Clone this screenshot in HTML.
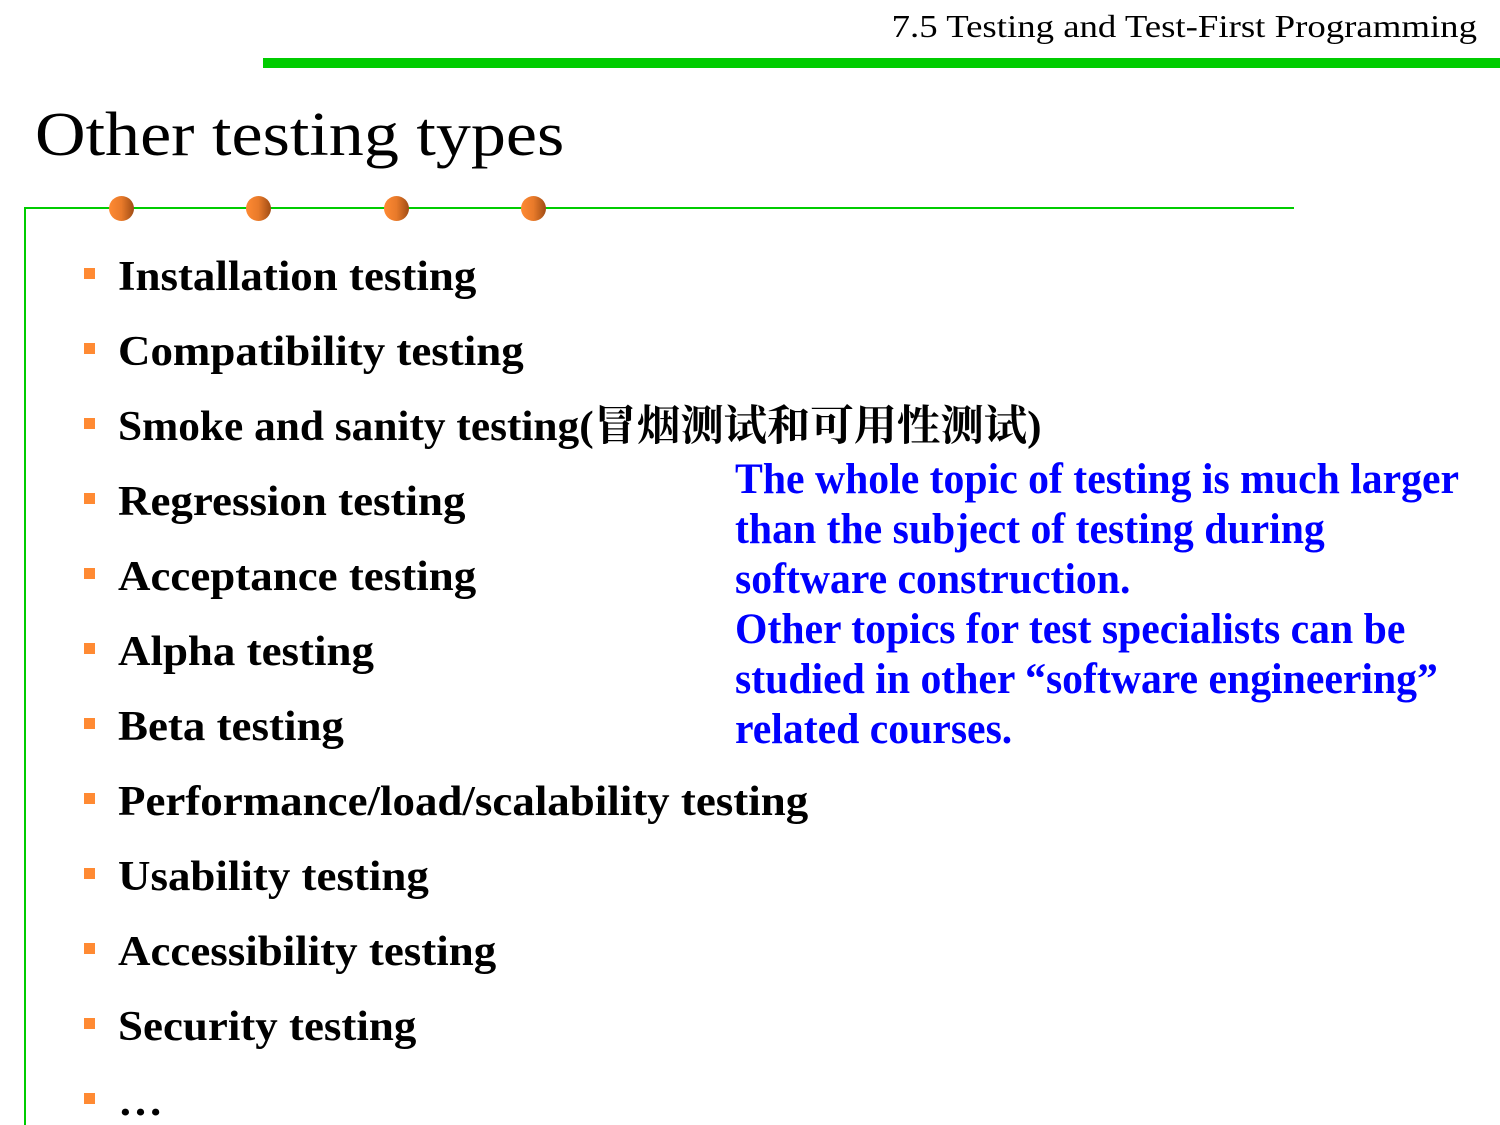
<!DOCTYPE html>
<html><head><meta charset="utf-8"><style>
body{margin:0;width:1500px;height:1125px;background:#fff;position:relative;overflow:hidden;font-family:"Liberation Serif","Noto Serif CJK SC",serif}
.a{position:absolute;white-space:nowrap}
.hdr{right:23px;top:8px;font-size:32px;color:#000;transform:scaleX(1.15);transform-origin:right}
.bar{left:263px;top:58px;width:1237px;height:10px;background:#00cc00}
.title{left:35px;top:100px;font-size:62px;transform:scaleX(1.13);transform-origin:left}
.hl{left:24px;top:207px;width:1270px;height:2px;background:#00cc00}
.vl{left:24px;top:207px;width:2px;height:918px;background:#00cc00}
.dot{position:absolute;top:196px;width:25px;height:25px;border-radius:50%;background:linear-gradient(90deg,#ff8a33 0%,#e87a2a 50%,#a04c14 100%)}
.b{position:absolute;left:84px;width:11px;height:11px;background:#ff8a33}
.t{position:absolute;left:118px;font-size:42px;font-weight:bold;white-space:nowrap;line-height:1;transform:scaleX(1.07);transform-origin:left}
.bl{position:absolute;left:735px;font-size:43px;font-weight:bold;color:#0000ff;white-space:nowrap;line-height:1;transform:scaleX(.97);transform-origin:left}
</style></head><body>
<div class="a hdr">7.5 Testing and Test-First Programming</div>
<div class="a bar"></div>
<div class="a title">Other testing types</div>
<div class="a hl"></div><div class="a vl"></div>
<div class="dot" style="left:109px"></div><div class="dot" style="left:246px"></div><div class="dot" style="left:384px"></div><div class="dot" style="left:521px"></div>

<div class="b" style="top:268px"></div><div class="t" style="top:256px">Installation testing</div>
<div class="b" style="top:343px"></div><div class="t" style="top:331px">Compatibility testing</div>
<div class="b" style="top:418px"></div><div class="t" style="top:406px;transform:scaleX(1.032)">Smoke and sanity testing(冒烟测试和可用性测试)</div>
<div class="b" style="top:493px"></div><div class="t" style="top:481px">Regression testing</div>
<div class="b" style="top:568px"></div><div class="t" style="top:556px">Acceptance testing</div>
<div class="b" style="top:643px"></div><div class="t" style="top:631px">Alpha testing</div>
<div class="b" style="top:718px"></div><div class="t" style="top:706px">Beta testing</div>
<div class="b" style="top:793px"></div><div class="t" style="top:781px">Performance/load/scalability testing</div>
<div class="b" style="top:868px"></div><div class="t" style="top:856px">Usability testing</div>
<div class="b" style="top:943px"></div><div class="t" style="top:931px">Accessibility testing</div>
<div class="b" style="top:1018px"></div><div class="t" style="top:1006px">Security testing</div>
<div class="b" style="top:1093px"></div><div class="t" style="top:1081px">…</div>

<div class="bl" style="top:458px">The whole topic of testing is much larger</div>
<div class="bl" style="top:508px">than the subject of testing during</div>
<div class="bl" style="top:558px">software construction.</div>
<div class="bl" style="top:608px">Other topics for test specialists can be</div>
<div class="bl" style="top:658px">studied in other “software engineering”</div>
<div class="bl" style="top:708px">related courses.</div>
</body></html>
